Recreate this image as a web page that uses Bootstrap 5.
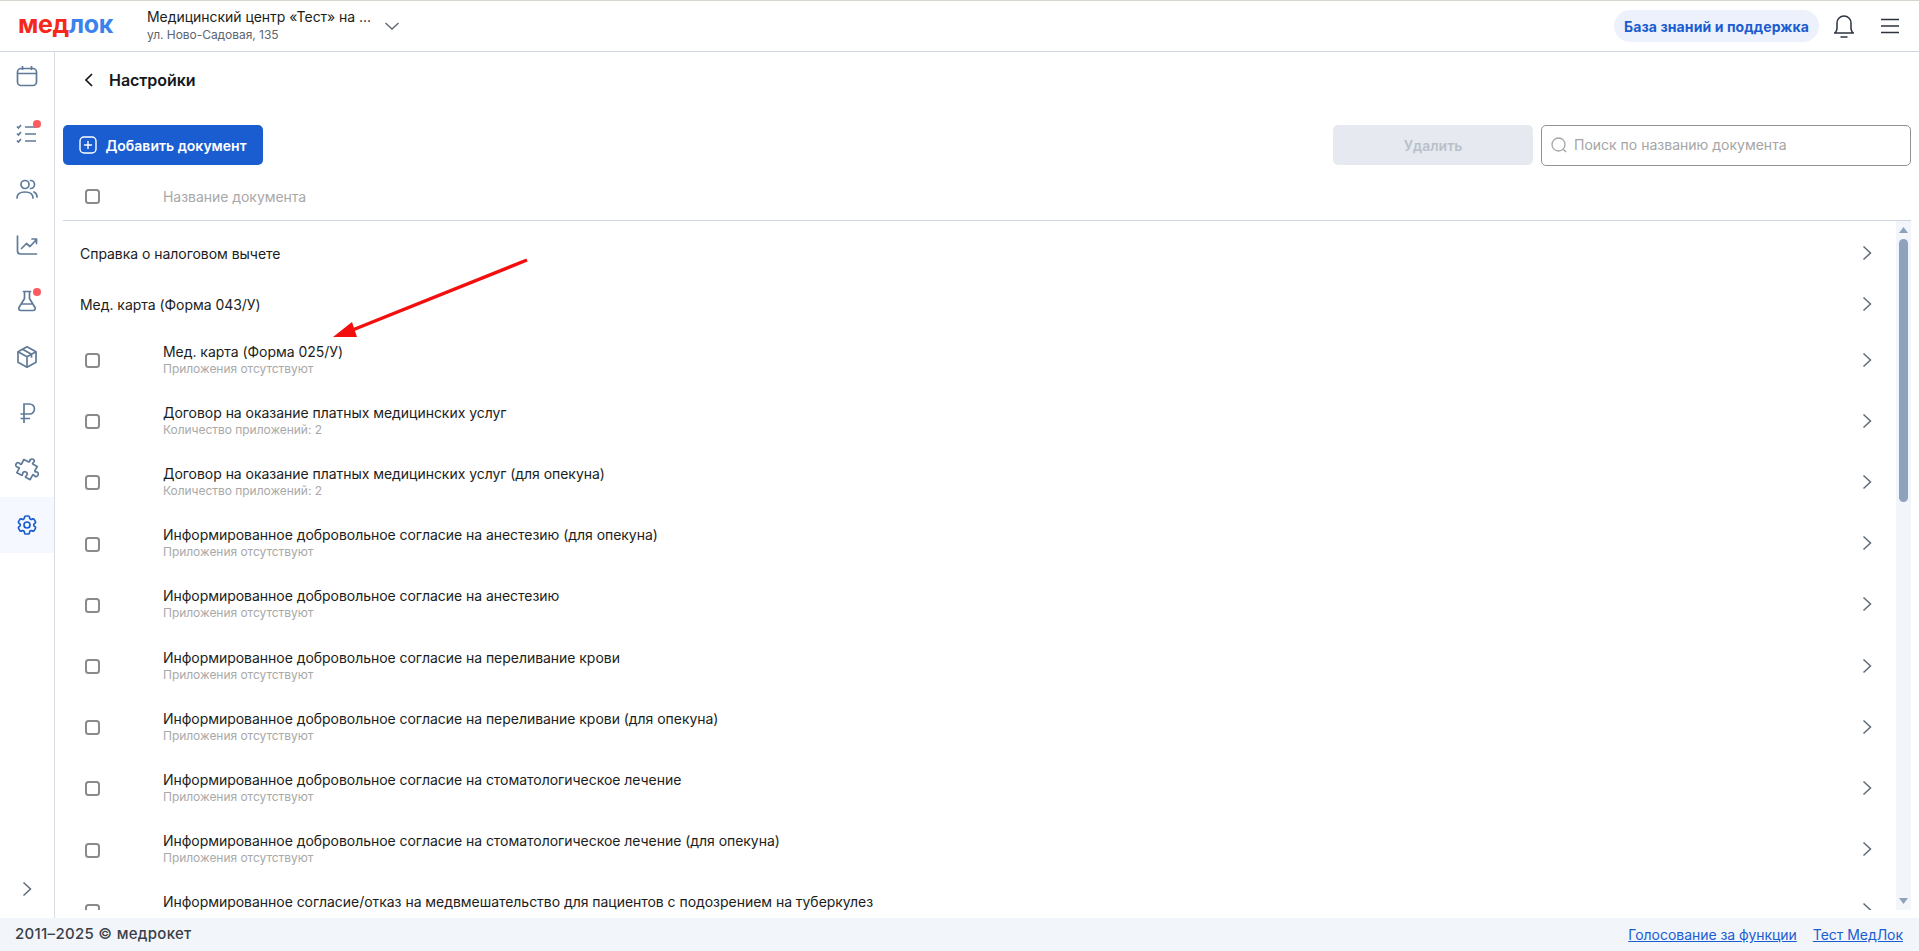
<!DOCTYPE html>
<html lang="ru">
<head>
<meta charset="utf-8">
<title>Настройки</title>
<link href="https://cdn.jsdelivr.net/npm/bootstrap@5.3.0/dist/css/bootstrap.min.css" rel="stylesheet">
<style>
html,body{height:100%;overflow:hidden}
body{font-family:Inter,"Liberation Sans",sans-serif;font-size:14px;letter-spacing:-.04px;color:#1b1d21;background:#fff}
.shell{height:951px;position:relative}
.topbar{height:52px;border-top:1px solid #d8d4ce;border-bottom:1px solid #cfd6e2;padding:0 19px 0 18px}
.logo-text{width:129px;font-size:25px;font-weight:700;line-height:1;letter-spacing:-.3px;margin-top:-3px}
.logo-red{color:#f4291c}.logo-blue{color:#3b82ec}
.clinic{width:237px;line-height:1.2}
.clinic-name{font-size:14px;color:#1b1d21;white-space:nowrap}
.clinic-addr{font-size:12px;color:#5d6570;margin-top:2px}
.pill-help{background:#edf1fb;color:#1a5dd0;font-weight:700;font-size:14px;letter-spacing:.1px;height:32px;width:205px;padding:0;border-radius:16px;border:0;white-space:nowrap}
.bell-gap{margin-left:15px}
.burger-gap{margin-left:26px}
.rail{width:55px;border-right:1px solid #d9dde3;flex:none}
.rail-item{height:56px;color:#5f7a99}
.rail-item svg{stroke-width:1.7}
.rail-item:first-child{height:53px;padding-bottom:6px}
.rail-item.on{background:#f5f8ff;color:#1a5dd0}
.rail-icon{position:relative;width:24px;height:24px}
.rail-dot{position:absolute;width:8px;height:8px;border-radius:50%;background:#fb5a5f;top:-1px;right:-2px}
.rail-end{height:58px}
.work{padding-left:8px;min-width:0}
.title-row{height:73px;padding:0 0 17px 21px}
.title-text{font-size:16px;font-weight:600;margin-left:15px;color:#15171a}
.tool-row{height:40px}
.btn-add{background:#1a5dd0;color:#fff;font-weight:600;font-size:14px;width:200px;height:40px;border:0;border-radius:5px;padding:0}
.btn-add:hover{background:#1a5dd0;color:#fff}
.btn-del,.btn-del:disabled{background:#e6eaf0;color:#b9c0c9;font-weight:600;font-size:14px;width:200px;height:40px;border:0;border-radius:5px;opacity:1}
.search-box{width:370px;height:41px;border:1px solid #929292;border-radius:5px;margin-left:8px;padding-left:9px}
.search-box input{border:0;outline:0;font-size:14px;padding:0 0 1px;margin-left:7px;background:none;box-shadow:none;flex:1}
.search-box input::placeholder{color:#a5a5a5;opacity:1}
.head-row{height:56px;border-bottom:1px solid #cfd6e2;color:#a8a8a8;padding-top:8px}
.chk{width:15px;height:15px;margin:0;border:2px solid #8a8a8a;border-radius:3px;flex:none;background:#fff}
.chk-col{width:100px;padding-left:22px;flex:none}
.list-wrap{height:689px;min-height:0}
.list-scroll{overflow:hidden;padding-top:7px;min-width:0}
.doc-row{height:61.2px;padding-right:23px}
.doc-row.plain{height:51px;padding-left:17px}
.doc-main{line-height:18px;color:#1b1d21;padding-bottom:2px}
.doc-sub{font-size:12px;line-height:16px;color:#a9a9a9;min-height:16px}
.doc-arrow{margin-left:auto;margin-bottom:2px;color:#5f6b78}
.track{width:15px;background:#f2f5fa;margin-right:8px;flex:none}
.track-arrow{height:18px}
.thumb{width:9px;height:263px;border-radius:5px;background:#8fa2bd;margin:0 auto}
.bottom{height:33px;background:#f2f5fa;padding:0 16px 0 15px;font-size:14px}
.brand-line{font-weight:500;font-size:15px;letter-spacing:.3px;color:#3a4048}
.bottom a{color:#1a5dd0;margin-left:16px}
.anno{position:absolute;left:0;top:0;pointer-events:none}
</style>
</head>
<body>
<div class="shell d-flex flex-column">
  <header class="topbar d-flex align-items-center flex-none">
    <div class="logo-text"><span class="logo-red">мед</span><span class="logo-blue">лок</span></div>
    <div class="clinic">
      <div class="clinic-name">Медицинский центр «Тест» на ...</div>
      <div class="clinic-addr">ул. Ново-Садовая, 135</div>
    </div>
    <svg width="16" height="16" viewBox="0 0 16 16" fill="none" stroke="#5d6570" stroke-width="1.3"><path d="M1.5 5l6.500 6 6.500-6"/></svg>
    <div class="ms-auto d-flex align-items-center">
      <button class="btn pill-help" type="button">База знаний и поддержка</button>
      <svg class="bell-gap" width="20" height="26" viewBox="2 0 20 26" fill="none" stroke="#2c3440" stroke-width="1.5" stroke-linejoin="round" stroke-linecap="round"><path d="M12 3a7 7 0 0 0-7 7v5c0 2-1 4-2.500 5h19c-1.500-1-2.500-3-2.500-5v-5a7 7 0 0 0-7-7Z"/><path d="M9 24h6"/></svg>
      <svg class="burger-gap" width="20" height="16" viewBox="0 0 20 16" fill="none" stroke="#2c3440" stroke-width="1.5"><path d="M1 1.500h18M1 8h18M1 14.500h18"/></svg>
    </div>
  </header>

  <div class="d-flex flex-grow-1" style="min-height:0">
    <nav class="rail d-flex flex-column">
      <div class="rail-item d-flex align-items-center justify-content-center"><svg width="24" height="24" viewBox="0 0 24 24" fill="none" stroke="currentColor" stroke-width="1.5"><rect x="2.500" y="4.500" width="19" height="17" rx="3.500"/><path d="M2.500 9.500h19M7.500 2v4M16.500 2v4"/></svg></div>
      <div class="rail-item d-flex align-items-center justify-content-center"><div class="rail-icon"><svg width="24" height="24" viewBox="0 0 24 24" fill="none" stroke="currentColor" stroke-width="1.5"><path d="M2 5.500l1.500 1.500 2.500-3M2 12.500l1.500 1.500 2.500-3M2 19.500l1.500 1.500 2.500-3M10 6h11M10 13h11M10 20h11"/></svg><span class="rail-dot"></span></div></div>
      <div class="rail-item d-flex align-items-center justify-content-center"><svg width="24" height="24" viewBox="0 0 24 24" fill="none" stroke="currentColor" stroke-width="1.5" stroke-linecap="round"><circle cx="10" cy="7.500" r="4"/><path d="M2 21c0-4 3.500-6 8-6s8 2 8 6M15.500 3.500a4 4 0 0 1 0 8M19 15c1.800.8 3 2.800 3 5"/></svg></div>
      <div class="rail-item d-flex align-items-center justify-content-center"><svg width="24" height="24" viewBox="0 0 24 24" fill="none" stroke="currentColor" stroke-width="1.5" stroke-linecap="round" stroke-linejoin="round"><path d="M2.500 3v15a3 3 0 0 0 3 3h16"/><path d="M6.500 15.500l5-5 3.500 3 6.500-7M17 6h4.500v4.500"/></svg></div>
      <div class="rail-item d-flex align-items-center justify-content-center"><div class="rail-icon"><svg width="24" height="24" viewBox="0 0 24 24" fill="none" stroke="currentColor" stroke-width="1.5" stroke-linecap="round" stroke-linejoin="round"><path d="M8.500 2.500h7M9.500 2.500v7L4 18.500A2 2 0 0 0 5.800 21.500h12.400a2 2 0 0 0 1.800-3L14.500 9.500v-7M6.500 15h11"/></svg><span class="rail-dot"></span></div></div>
      <div class="rail-item d-flex align-items-center justify-content-center"><svg width="24" height="24" viewBox="0 0 24 24" fill="none" stroke="currentColor" stroke-width="1.5" stroke-linejoin="round"><path d="M12 1.800l9 5v10.400l-9 5-9-5V6.800Z"/><path d="M3 6.800l9 5 9-5M12 11.800v10.400M7.500 4.300l9 5v3.500"/></svg></div>
      <div class="rail-item d-flex align-items-center justify-content-center"><svg width="24" height="24" viewBox="0 0 24 24" fill="none" stroke="currentColor" stroke-width="1.700"><path d="M9 22V3h5.500a5 5 0 0 1 0 10H5.500M5.500 17.500H15"/></svg></div>
      <div class="rail-item d-flex align-items-center justify-content-center"><svg width="24" height="24" viewBox="0 0 24 24" fill="none" stroke="currentColor" stroke-width="1.500" stroke-linejoin="round"><path d="M10 2.500a2 2 0 0 1 4 0c0 .8-.5 1.200-.5 1.800 0 .5.400.7 1 .7H19v4.500c0 .6.200 1 .7 1 .6 0 1-.5 1.800-.5a2.300 2.300 0 0 1 0 4.600c-.8 0-1.200-.5-1.800-.5-.5 0-.7.400-.7 1V20h-4.500c-.6 0-1-.2-1-.7 0-.6.500-1 .5-1.800a2.300 2.300 0 0 0-4.600 0c0 .8.500 1.200.5 1.800 0 .5-.4.700-1 .7H4v-4.500c0-.6-.2-1-.7-1-.6 0-1 .5-1.800.5a2.300 2.300 0 0 1 0-4.600c.8 0 1.200.5 1.800.5.500 0 .7-.4.700-1V5h5c.6 0 1-.2 1-.7 0-.6-.5-1-.5-1.800Z" transform="rotate(28 12 12) translate(.8 0)"/></svg></div>
      <div class="rail-item on d-flex align-items-center justify-content-center"><svg width="24" height="24" viewBox="0 0 24 24" fill="none" stroke="currentColor" stroke-width="1.500"><path d="M9.594 3.940c.09-.542.56-.94 1.110-.94h2.593c.55 0 1.020.398 1.110.94l.213 1.281c.063.374.313.686.645.87.074.04.147.083.22.127.325.196.72.257 1.075.124l1.217-.456a1.125 1.125 0 0 1 1.370.49l1.296 2.247a1.125 1.125 0 0 1-.26 1.431l-1.003.827c-.293.241-.438.613-.43.992a7.723 7.723 0 0 1 0 .255c-.008.378.137.75.43.991l1.004.827c.424.35.534.955.26 1.430l-1.298 2.247a1.125 1.125 0 0 1-1.369.491l-1.217-.456c-.355-.133-.75-.072-1.076.124a6.470 6.470 0 0 1-.22.128c-.331.183-.581.495-.644.869l-.213 1.281c-.09.543-.56.94-1.110.94h-2.594c-.55 0-1.019-.398-1.110-.94l-.213-1.281c-.062-.374-.312-.686-.644-.87a6.520 6.520 0 0 1-.22-.127c-.325-.196-.72-.257-1.076-.124l-1.217.456a1.125 1.125 0 0 1-1.369-.49l-1.297-2.247a1.125 1.125 0 0 1 .26-1.431l1.004-.827c.292-.24.437-.613.43-.991a6.932 6.932 0 0 1 0-.255c.007-.38-.138-.751-.43-.992l-1.004-.827a1.125 1.125 0 0 1-.26-1.430l1.297-2.247a1.125 1.125 0 0 1 1.370-.491l1.216.456c.356.133.751.072 1.076-.124.072-.044.146-.086.22-.128.332-.183.582-.495.644-.869l.214-1.280Z"/><circle cx="12" cy="12" r="3"/></svg></div>
      <div class="rail-end mt-auto d-flex align-items-center justify-content-center"><svg width="16" height="20" viewBox="0 0 16 20" fill="none" stroke="#5f6b78" stroke-width="1.500"><path d="M4.500 3.500l7 6.500-7 6.500"/></svg></div>
    </nav>

    <main class="work flex-grow-1 d-flex flex-column">
      <div class="title-row d-flex align-items-center">
        <svg width="10" height="16" viewBox="0 0 10 16" fill="none" stroke="#15171a" stroke-width="1.700"><path d="M8 2L2 8l6 6"/></svg>
        <span class="title-text">Настройки</span>
      </div>
      <div class="tool-row d-flex align-items-center" style="padding-right:8px">
        <button class="btn btn-add d-flex align-items-center justify-content-center gap-2" type="button">
          <svg width="18" height="18" viewBox="0 0 18 18" fill="none" stroke="#fff" stroke-width="1.400" stroke-linecap="round"><rect x="1" y="1" width="16" height="16" rx="4"/><path d="M9 5.500v7M5.500 9h7"/></svg>
          Добавить документ
        </button>
        <button class="btn btn-del ms-auto" type="button" disabled>Удалить</button>
        <div class="search-box d-flex align-items-center">
          <svg width="16" height="16" viewBox="0 0 16 16" fill="none" stroke="#a5a5a5" stroke-width="1.300"><circle cx="7.500" cy="7.500" r="6.500"/><path d="M12.200 12.200l2.800 2.800"/></svg>
          <input class="form-control" type="text" placeholder="Поиск по названию документа">
        </div>
      </div>
      <div class="head-row d-flex align-items-center" style="margin-right:8px">
        <div class="chk-col d-flex align-items-center"><input class="form-check-input chk" type="checkbox" aria-label="Выбрать все"></div>
        <span>Название документа</span>
      </div>
      <div class="list-wrap d-flex">
        <div class="list-scroll flex-grow-1">
          <div class="doc-row plain d-flex align-items-center"><span>Справка о налоговом вычете</span><svg class="doc-arrow" width="12" height="18" viewBox="0 0 12 18" fill="none" stroke="currentColor" stroke-width="1.500"><path d="M2.500 2.500l7 6.500-7 6.500"/></svg></div>
          <div class="doc-row plain d-flex align-items-center"><span>Мед. карта (Форма 043/У)</span><svg class="doc-arrow" width="12" height="18" viewBox="0 0 12 18" fill="none" stroke="currentColor" stroke-width="1.500"><path d="M2.500 2.500l7 6.500-7 6.500"/></svg></div>
          <div id="rows"></div>
        </div>
        <div class="track d-flex flex-column">
          <div class="track-arrow d-flex align-items-center justify-content-center"><svg width="9" height="6" viewBox="0 0 9 6" fill="#8fa2bd"><path d="M4.500 0L9 6H0Z"/></svg></div>
          <div class="thumb"></div>
          <div class="track-arrow mt-auto d-flex align-items-center justify-content-center"><svg width="9" height="6" viewBox="0 0 9 6" fill="#8fa2bd"><path d="M4.500 6L9 0H0Z"/></svg></div>
        </div>
      </div>
    </main>
  </div>

  <footer class="bottom d-flex align-items-center flex-none">
    <span class="brand-line">2011–2025 © медрокет</span>
    <a class="ms-auto" href="#">Голосование за функции</a>
    <a href="#">Тест МедЛок</a>
  </footer>

  <svg class="anno" width="1919" height="951" viewBox="0 0 1919 951"><path d="M527 260L350 331" stroke="#f40f0f" stroke-width="3.500" fill="none"/><path d="M333 337L352 322L357 337Z" fill="#f40f0f"/></svg>
</div>
<script>
var docs=[["Мед. карта (Форма 025/У)","Приложения отсутствуют"],["Договор на оказание платных медицинских услуг","Количество приложений: 2"],["Договор на оказание платных медицинских услуг (для опекуна)","Количество приложений: 2"],["Информированное добровольное согласие на анестезию (для опекуна)","Приложения отсутствуют"],["Информированное добровольное согласие на анестезию","Приложения отсутствуют"],["Информированное добровольное согласие на переливание крови","Приложения отсутствуют"],["Информированное добровольное согласие на переливание крови (для опекуна)","Приложения отсутствуют"],["Информированное добровольное согласие на стоматологическое лечение","Приложения отсутствуют"],["Информированное добровольное согласие на стоматологическое лечение (для опекуна)","Приложения отсутствуют"],["Информированное согласие/отказ на медвмешательство для пациентов с подозрением на туберкулез",""]];
document.getElementById("rows").innerHTML=docs.map(function(d){return '<div class="doc-row d-flex align-items-center"><div class="chk-col d-flex align-items-center"><input class="form-check-input chk" type="checkbox" aria-label="Выбрать"></div><div class="doc-main"><div>'+d[0]+'</div><div class="doc-sub">'+d[1]+'</div></div><svg class="doc-arrow" width="12" height="18" viewBox="0 0 12 18" fill="none" stroke="currentColor" stroke-width="1.500"><path d="M2.500 2.500l7 6.500-7 6.500"/></svg></div>'}).join("");
</script>
</body>
</html>
